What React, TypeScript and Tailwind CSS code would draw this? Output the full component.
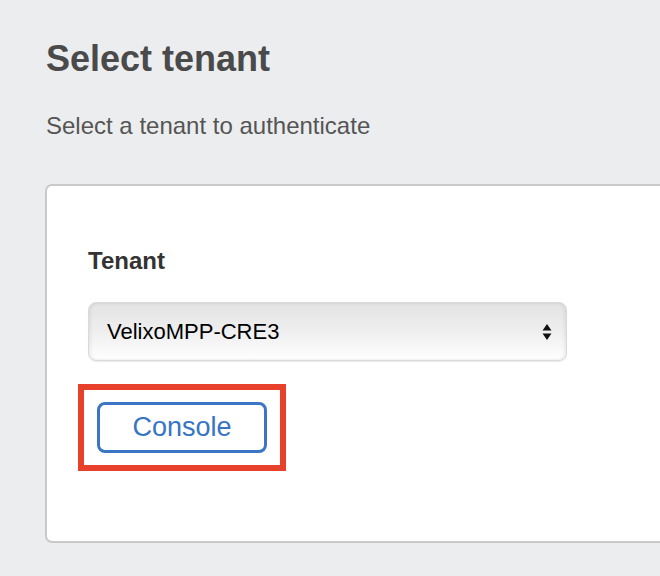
import React from 'react';

function SelectArrows() {
  return (
    <svg width="10" height="18" viewBox="0 0 10 18" className="shrink-0">
      <path d="M5 1 L9.5 7.5 L0.5 7.5 Z" fill="#111" />
      <path d="M5 17 L9.5 10.5 L0.5 10.5 Z" fill="#111" />
    </svg>
  );
}

export default function App() {
  return (
    <div
      className="w-[660px] h-[576px] overflow-hidden bg-[#ecedef] pl-[45px] pt-[41px]"
      style={{ fontFamily: '"Liberation Sans", Arial, Helvetica, sans-serif' }}
    >
      <h1 className="pl-px text-[36px] leading-[36px] font-bold text-[#4a4a4a]">Select tenant</h1>
      <p className="mt-[37px] pl-px text-[24px] leading-[24px] text-[#555]">
        Select a tenant to authenticate
      </p>

      {/* Tenant card */}
      <div className="mt-[46px] w-[700px] rounded-[7px] border-2 border-[#c9c9cb] bg-white pl-[41px] pt-[63px] pb-[70px]">
        <label className="block text-[24px] leading-[24px] font-bold text-[#333]">Tenant</label>

        <div className="mt-[29px] flex h-[59px] w-[479px] items-center justify-between rounded-[8px] border border-[#dadada] bg-gradient-to-b from-[#e3e3e3] via-[#efefef] to-[#fefefe] pl-[18px] pr-[14px] shadow-[inset_2px_0_3px_rgba(0,0,0,0.06),inset_-2px_0_3px_rgba(0,0,0,0.06),0_1px_1px_rgba(0,0,0,0.08)]">
          <span className="text-[22px] text-black">VelixoMPP-CRE3</span>
          <SelectArrows />
        </div>

        {/* highlighted action */}
        <div className="mt-[23px] -ml-[10px] inline-block border-[6px] border-[#e8412b] px-[13px] py-[12px]">
          <button className="flex h-[51px] w-[170px] items-center justify-center rounded-[8px] border-[3px] border-[#3a76c4] bg-white text-[27px] text-[#3674c4]">
            Console
          </button>
        </div>
      </div>
    </div>
  );
}
